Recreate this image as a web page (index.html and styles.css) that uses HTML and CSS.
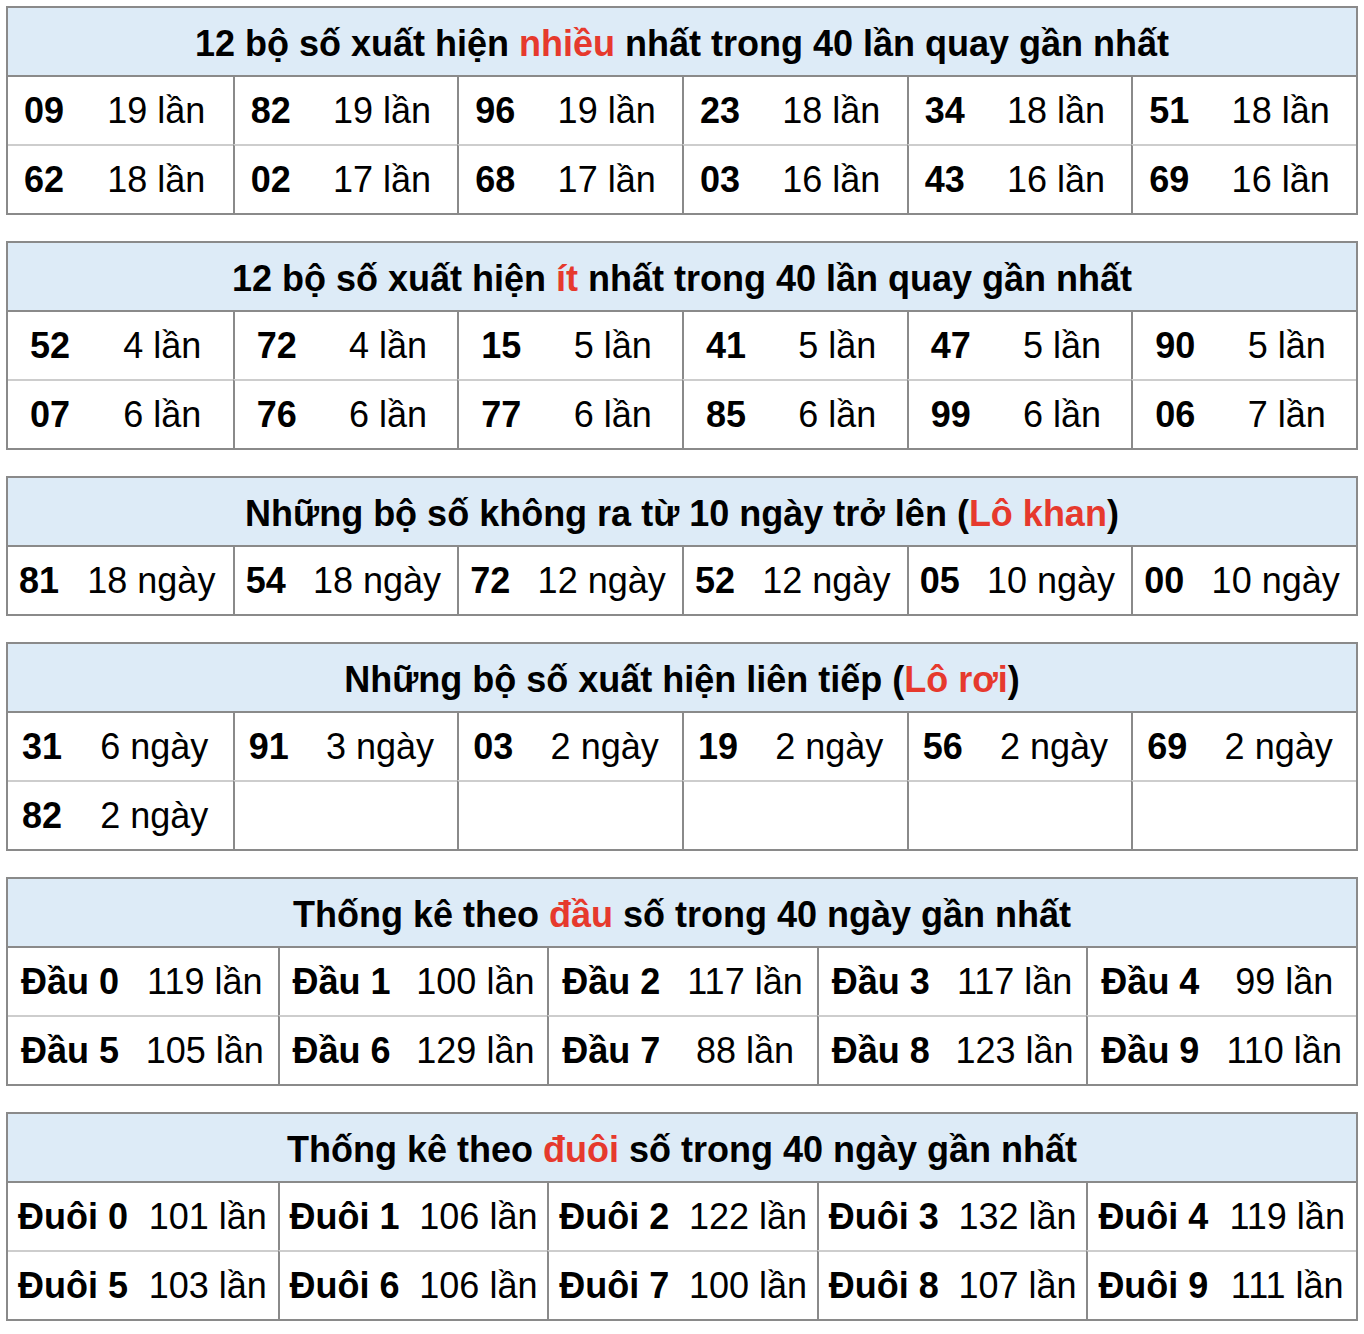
FILE: index.html
```html
<!DOCTYPE html>
<html lang="vi">
<head>
<meta charset="utf-8">
<title>Thống kê lô tô</title>
<link rel="stylesheet" href="styles.css">
</head>
<body>
<div class="page">

<section class="tbl t1">
  <div class="hd">12 bộ số xuất hiện <span class="red">nhiều</span> nhất trong 40 lần quay gần nhất</div>
  <div class="grid g6">
    <div class="cell"><b>09</b><span>19 lần</span></div>
    <div class="cell"><b>82</b><span>19 lần</span></div>
    <div class="cell"><b>96</b><span>19 lần</span></div>
    <div class="cell"><b>23</b><span>18 lần</span></div>
    <div class="cell"><b>34</b><span>18 lần</span></div>
    <div class="cell"><b>51</b><span>18 lần</span></div>
    <div class="cell"><b>62</b><span>18 lần</span></div>
    <div class="cell"><b>02</b><span>17 lần</span></div>
    <div class="cell"><b>68</b><span>17 lần</span></div>
    <div class="cell"><b>03</b><span>16 lần</span></div>
    <div class="cell"><b>43</b><span>16 lần</span></div>
    <div class="cell"><b>69</b><span>16 lần</span></div>
  </div>
</section>

<section class="tbl t2">
  <div class="hd">12 bộ số xuất hiện <span class="red">ít</span> nhất trong 40 lần quay gần nhất</div>
  <div class="grid g6">
    <div class="cell"><b>52</b><span>4 lần</span></div>
    <div class="cell"><b>72</b><span>4 lần</span></div>
    <div class="cell"><b>15</b><span>5 lần</span></div>
    <div class="cell"><b>41</b><span>5 lần</span></div>
    <div class="cell"><b>47</b><span>5 lần</span></div>
    <div class="cell"><b>90</b><span>5 lần</span></div>
    <div class="cell"><b>07</b><span>6 lần</span></div>
    <div class="cell"><b>76</b><span>6 lần</span></div>
    <div class="cell"><b>77</b><span>6 lần</span></div>
    <div class="cell"><b>85</b><span>6 lần</span></div>
    <div class="cell"><b>99</b><span>6 lần</span></div>
    <div class="cell"><b>06</b><span>7 lần</span></div>
  </div>
</section>

<section class="tbl t3">
  <div class="hd">Những bộ số không ra từ 10 ngày trở lên (<span class="red">Lô khan</span>)</div>
  <div class="grid g6">
    <div class="cell"><b>81</b><span>18 ngày</span></div>
    <div class="cell"><b>54</b><span>18 ngày</span></div>
    <div class="cell"><b>72</b><span>12 ngày</span></div>
    <div class="cell"><b>52</b><span>12 ngày</span></div>
    <div class="cell"><b>05</b><span>10 ngày</span></div>
    <div class="cell"><b>00</b><span>10 ngày</span></div>
  </div>
</section>

<section class="tbl t4">
  <div class="hd">Những bộ số xuất hiện liên tiếp (<span class="red">Lô rơi</span>)</div>
  <div class="grid g6">
    <div class="cell"><b>31</b><span>6 ngày</span></div>
    <div class="cell"><b>91</b><span>3 ngày</span></div>
    <div class="cell"><b>03</b><span>2 ngày</span></div>
    <div class="cell"><b>19</b><span>2 ngày</span></div>
    <div class="cell"><b>56</b><span>2 ngày</span></div>
    <div class="cell"><b>69</b><span>2 ngày</span></div>
    <div class="cell"><b>82</b><span>2 ngày</span></div>
    <div class="cell"></div>
    <div class="cell"></div>
    <div class="cell"></div>
    <div class="cell"></div>
    <div class="cell"></div>
  </div>
</section>

<section class="tbl t5">
  <div class="hd">Thống kê theo <span class="red">đầu</span> số trong 40 ngày gần nhất</div>
  <div class="grid g5">
    <div class="cell"><b>Đầu 0</b><span>119 lần</span></div>
    <div class="cell"><b>Đầu 1</b><span>100 lần</span></div>
    <div class="cell"><b>Đầu 2</b><span>117 lần</span></div>
    <div class="cell"><b>Đầu 3</b><span>117 lần</span></div>
    <div class="cell"><b>Đầu 4</b><span>99 lần</span></div>
    <div class="cell"><b>Đầu 5</b><span>105 lần</span></div>
    <div class="cell"><b>Đầu 6</b><span>129 lần</span></div>
    <div class="cell"><b>Đầu 7</b><span>88 lần</span></div>
    <div class="cell"><b>Đầu 8</b><span>123 lần</span></div>
    <div class="cell"><b>Đầu 9</b><span>110 lần</span></div>
  </div>
</section>

<section class="tbl t6">
  <div class="hd">Thống kê theo <span class="red">đuôi</span> số trong 40 ngày gần nhất</div>
  <div class="grid g5">
    <div class="cell"><b>Đuôi 0</b><span>101 lần</span></div>
    <div class="cell"><b>Đuôi 1</b><span>106 lần</span></div>
    <div class="cell"><b>Đuôi 2</b><span>122 lần</span></div>
    <div class="cell"><b>Đuôi 3</b><span>132 lần</span></div>
    <div class="cell"><b>Đuôi 4</b><span>119 lần</span></div>
    <div class="cell"><b>Đuôi 5</b><span>103 lần</span></div>
    <div class="cell"><b>Đuôi 6</b><span>106 lần</span></div>
    <div class="cell"><b>Đuôi 7</b><span>100 lần</span></div>
    <div class="cell"><b>Đuôi 8</b><span>107 lần</span></div>
    <div class="cell"><b>Đuôi 9</b><span>111 lần</span></div>
  </div>
</section>

</div>
</body>
</html>
```

FILE: styles.css
```css
html, body {
  margin: 0;
  padding: 0;
  background: #ffffff;
}

body {
  font-family: "Liberation Sans", Arial, Helvetica, sans-serif;
  color: #000;
  font-size: 36px;
}

.page {
  padding: 6px 6px;
  display: flex;
  flex-direction: column;
  gap: 26px;
}

.tbl {
  border: 2px solid #8a8a8a;
}

.hd {
  background: #ddebf7;
  height: 63px;
  line-height: 63px;
  padding-top: 4px;
  border-bottom: 2px solid #8a8a8a;
  text-align: center;
  font-weight: 700;
  font-size: 36px;
  white-space: nowrap;
  overflow: hidden;
}

.red {
  color: #e6392d;
}

.grid {
  display: grid;
}

.g6 {
  grid-template-columns: repeat(6, 1fr);
}

.g5 {
  grid-template-columns: repeat(5, 1fr);
}

.cell {
  display: grid;
  grid-template-columns: var(--n, 72px) 1fr;
  align-items: center;
  text-align: center;
  height: 67px;
  min-width: 0;
  border-left: 2px solid #8a8a8a;
  border-top: 2px solid #cdcdcd;
  white-space: nowrap;
}

.g6 .cell:nth-child(6n+1),
.g5 .cell:nth-child(5n+1) {
  border-left: none;
}

.g6 .cell:nth-child(-n+6),
.g5 .cell:nth-child(-n+5) {
  border-top: none;
}

.cell b {
  font-weight: 700;
}

.cell span {
  font-weight: 400;
}

.t1 .cell { --n: 72px; }
.t2 .cell { --n: 84px; }
.t3 .cell { --n: 62px; }
.t4 .cell { --n: 68px; }
.t5 .cell { --n: 124px; }
.t6 .cell { --n: 130px; }
```
